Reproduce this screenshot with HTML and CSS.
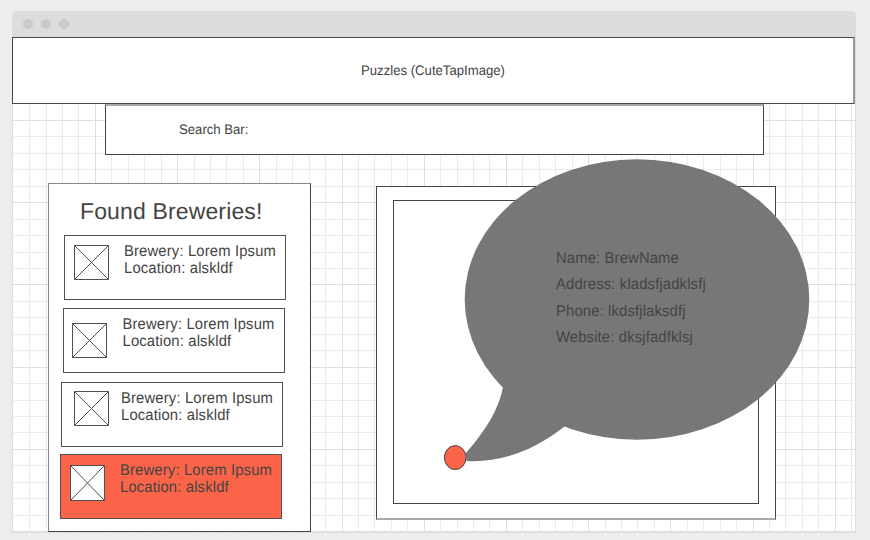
FILE: index.html
```
<!DOCTYPE html>
<html lang="en">
<head>
<meta charset="utf-8">
<title>Puzzles</title>
<link rel="stylesheet" href="styles.css">
</head>
<body>
<div class="window">
  <div class="titlebar"><span class="dot"></span><span class="dot"></span><span class="dot"></span></div>
  <div class="page">
    <svg class="grid" width="844" height="496" aria-hidden="true"><path class="minor"/><path class="major"/></svg>
    <header class="header"><span class="label">Puzzles (CuteTapImage)</span></header>
    <div class="search"><span class="label">Search Bar:</span></div>
    <main class="columns">
      <section class="results">
        <h1>Found Breweries!</h1>
        <article class="card first">
          <svg class="thumb" viewBox="0 0 35 35"><path d="M.5.5h34v34H.5zL34.500 34.500M34.500.5L.5 34.500"/></svg>
          <p>Brewery: Lorem Ipsum<br>Location: alskldf</p>
        </article>
        <article class="card second">
          <svg class="thumb" viewBox="0 0 35 35"><path d="M.5.5h34v34H.5zL34.500 34.500M34.500.5L.5 34.500"/></svg>
          <p>Brewery: Lorem Ipsum<br>Location: alskldf</p>
        </article>
        <article class="card third">
          <svg class="thumb" viewBox="0 0 35 35"><path d="M.5.5h34v34H.5zL34.500 34.500M34.500.5L.5 34.500"/></svg>
          <p>Brewery: Lorem Ipsum<br>Location: alskldf</p>
        </article>
        <article class="card active">
          <svg class="thumb" viewBox="0 0 35 36"><path d="M.5.5h34v35H.5zL34.500 35.500M34.500.5L.5 35.500"/></svg>
          <p>Brewery: Lorem Ipsum<br>Location: alskldf</p>
        </article>
      </section>
      <section class="map">
        <div class="map-inner"></div>
        <div class="callout">
          <svg class="bubble" width="370" height="320" viewBox="442 158 370 320">
            <ellipse class="pin" cx="455.200" cy="457.600" rx="10.800" ry="12"/>
            <ellipse class="shape" cx="637" cy="299.500" rx="172.300" ry="140.200"/>
            <path class="shape" d="M503 387C499 409 486 430 466 453C465 455 465 459 467 461C501 463 535 450 564.500 426.500L600 380L520 360Z"/>
          </svg>
          <p>Name: BrewName<br>Address: kladsfjadklsfj<br>Phone: lkdsfjlaksdfj<br>Website: dksjfadfklsj</p>
        </div>
      </section>
    </main>
  </div>
</div>
<script src="grid.js"></script>
</body>
</html>
```
FILE: grid.js
```
// Draw the canvas grid; every fifth line is a stronger one.
const paths = { minor: "", major: "" };
for (let k = 1; k <= 51; k++) {
  const x = Math.floor(13.2 + 16.44 * k) - 12 + 0.5;
  paths[k % 5 ? "minor" : "major"] += `M${x} 0V496`;
}
for (let k = 0; k <= 25; k++) {
  const y = Math.floor(120.4 + 16.45 * k) - 37 + 0.5;
  paths[k % 5 ? "minor" : "major"] += `M0 ${y}H844`;
}
for (const name in paths) {
  document.querySelector("." + name).setAttribute("d", paths[name]);
}
```
FILE: styles.css
```
* { box-sizing: border-box; }
body { margin: 0; height: 540px; padding: 11px 14px 0 12px; overflow: hidden; background: #ededed; color: #444; font-family: "Liberation Sans", Arial, sans-serif; text-rendering: geometricPrecision; }
p, h1 { margin: 0; font-weight: 400; }
.window { height: 522px; border-radius: 5px 5px 0 0; overflow: hidden; }
.titlebar { height: 26px; padding: 8px 11px; display: flex; gap: 8px; background: #ddd; }
.dot { width: 10px; height: 10px; border-radius: 50%; background: #c9c9c9; }
.page { position: relative; height: 496px; background: #fff; border: solid #ddd; border-width: 0 1px 1px; }
.grid { position: absolute; left: -1px; top: 0; fill: none; }
.minor { stroke: #ebebeb; }
.major { stroke: #dedede; }
.label { display: inline-block; transform: scaleY(1.05); }
.header { position: relative; margin-left: -1px; width: 843px; height: 67px; border: 1px solid #484848; border-right: 2px solid #999; background: #fff; text-align: center; font-size: 13.15px; line-height: 65px; }
.search { position: relative; margin-left: 92px; width: 659px; height: 51px; padding-left: 73px; border: 1px solid #444; border-top: 2px solid #aaa; background: #fff; font-size: 13.15px; line-height: 48px; }
.columns { position: relative; display: flex; align-items: flex-start; gap: 65px; padding: 28px 0 0 35px; }
.results { width: 263px; height: 349px; border: 1px solid #444; border-top-color: #888; border-left-color: #888; background: #fff; }
.results h1 { height: 51px; padding-left: 31px; font-size: 23px; line-height: 55px; letter-spacing: .14px; }
.card { width: 222px; height: 65px; border: 1px solid #505050; display: flex; align-items: flex-start; }
.card p { font-size: 14.8px; line-height: 16.600px; letter-spacing: .16px; white-space: nowrap; padding-top: 6.8px; margin-left: 15px; transform: scaleY(1.055); transform-origin: 0 0; }
.thumb { width: 35px; height: 35px; margin: 9px 0 0 9px; fill: #fff; stroke: #505050; stroke-width: 1; flex: none; }
.first { margin-left: 15px; }
.second { margin: 8px 0 0 14px; }
.second .thumb { margin-top: 14px; margin-left: 8px; }
.second p { margin-left: 15.5px; }
.third { margin: 9px 0 0 12px; }
.third .thumb { margin-top: 8px; margin-left: 12px; }
.third p { margin-left: 12px; }
.active { margin: 7px 0 0 11px; background: #fb6449; }
.active .thumb { height: 36px; margin-top: 10px; }
.map { position: relative; margin-top: 3px; width: 400px; height: 334px; padding: 13px 16px; border: 1px solid #444; border-bottom: 2px solid #aaa; background: #fff; }
.map-inner { width: 366px; height: 304px; border: 1px solid #444; }
.callout { position: absolute; left: 65px; top: -29px; }
.bubble { display: block; }
.shape { fill: #777; }
.pin { fill: #fb6449; stroke: #444; }
.callout p { position: absolute; left: 114px; top: 87.7px; font-size: 14.8px; line-height: 24.9px; letter-spacing: .15px; white-space: nowrap; transform: scaleY(1.055); transform-origin: 0 0; }
```
